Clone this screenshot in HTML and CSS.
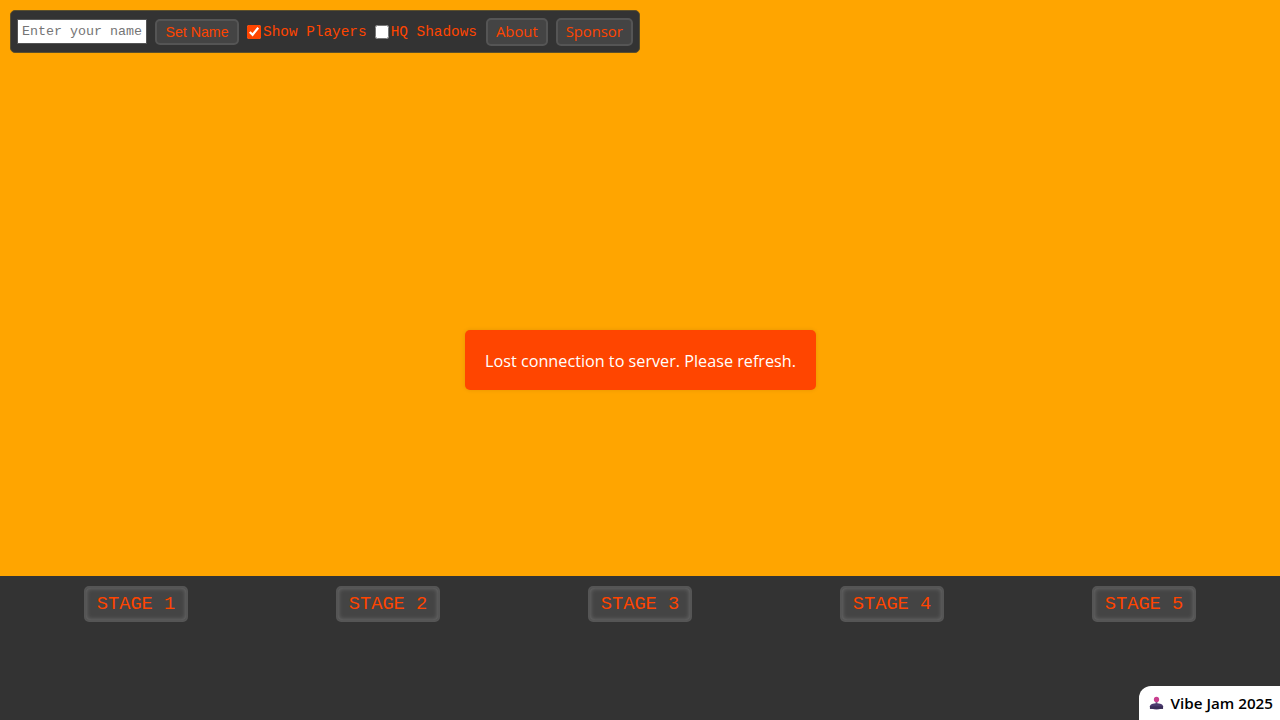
FILE: index.html
```html
<!DOCTYPE html>
<html lang="en">
<head>
    <meta charset="UTF-8">
    <meta name="viewport" content="width=device-width, initial-scale=1.0">
    <title>Stage Game</title>
    <link rel="stylesheet" href="styles.css">
</head>
<body>
    <div class="game-area">
        <div class="controls">
            <input class="name-input" type="text" placeholder="Enter your name">
            <button class="control-button set-name">Set Name</button>
            <label class="control-label"><input type="checkbox" checked>Show Players</label>
            <label class="control-label"><input type="checkbox">HQ Shadows</label>
            <button class="control-button">About</button>
            <button class="control-button">Sponsor</button>
        </div>
    </div>
    <div class="stage-bar">
        <div class="stage-cell"><button class="stage-button">STAGE 1</button></div>
        <div class="stage-cell"><button class="stage-button">STAGE 2</button></div>
        <div class="stage-cell"><button class="stage-button">STAGE 3</button></div>
        <div class="stage-cell"><button class="stage-button">STAGE 4</button></div>
        <div class="stage-cell"><button class="stage-button">STAGE 5</button></div>
    </div>
    <div class="message">Lost connection to server. Please refresh.</div>
    <a class="jam-badge" href="#">
        <svg class="jam-icon" viewBox="0 0 16 16" width="15" height="15">
            <rect x="7" y="4" width="2" height="6" fill="#7a5a86"/>
            <circle cx="8" cy="3.6" r="2.8" fill="#c93f8f"/>
            <ellipse cx="8" cy="11" rx="7" ry="3.4" fill="#4b3a6e"/>
            <rect x="1" y="11" width="14" height="2.8" fill="#3a2d58"/>
        </svg>
        Vibe Jam 2025
    </a>
</body>
</html>
```

FILE: styles.css
```css
body {
    margin: 0;
    display: flex;
    flex-direction: column;
    height: 720px;
    overflow: hidden;
    background-color: #333;
}

.game-area {
    flex: 0 0 576px;
    position: relative;
    background-color: #ffa500;
}

.controls {
    position: absolute;
    top: 10px;
    left: 10px;
    display: flex;
    align-items: center;
    gap: 8px;
    height: 43px;
    box-sizing: border-box;
    padding: 0 6px;
    background: #333;
    border: 1px solid #5c4f2a;
    border-radius: 5px;
    white-space: nowrap;
}

.name-input {
    width: 130px;
    height: 25px;
    box-sizing: border-box;
    padding: 0 4px;
    border: 1px solid #555;
    background: white;
    font-family: "Liberation Mono", monospace;
    font-size: 13.33px;
}

.name-input::placeholder {
    color: #757575;
}

.control-button {
    height: 28px;
    padding: 0 8px 2px;
    background: #444;
    color: #ff4500;
    border: 2px solid #555;
    border-radius: 5px;
    font-family: "Open Sans", sans-serif;
    font-size: 14.8px;
}

.set-name {
    width: 84px;
    height: 26px;
    padding: 0;
    font-family: "Liberation Sans", Arial, sans-serif;
    font-size: 14.2px;
}

.control-label {
    display: flex;
    align-items: center;
    color: #ff4500;
    font-family: "Liberation Mono", monospace;
    font-size: 14.4px;
}

.control-label input {
    width: 14px;
    height: 14px;
    margin: 0 2px 0 0;
    accent-color: #ff4500;
}

.control-label + .control-button {
    margin-left: 1px;
}

.message {
    position: absolute;
    top: 330px;
    left: 465px;
    width: 351px;
    height: 60px;
    box-sizing: border-box;
    padding-top: 2px;
    display: flex;
    align-items: center;
    justify-content: center;
    background: #ff4500;
    color: white;
    border-radius: 5px;
    font-family: "Open Sans", sans-serif;
    font-size: 16.2px;
    box-shadow: 0 0 4px rgba(0, 0, 0, 0.1);
}

.stage-bar {
    flex: 1;
    display: flex;
    padding: 0 10px;
    background: #333;
}

.stage-cell {
    flex: 1;
    display: flex;
    justify-content: center;
    align-items: flex-start;
    padding-top: 10px;
}

.stage-button {
    width: 104px;
    height: 36px;
    padding: 0;
    background: #444;
    color: #ff4500;
    border: 2px solid #555;
    border-radius: 5px;
    box-shadow: inset 0 0 5px rgba(255, 255, 255, 0.25);
    font-family: "Liberation Mono", monospace;
    font-size: 18.7px;
}

.jam-badge {
    position: absolute;
    right: 0;
    bottom: 0;
    display: flex;
    align-items: center;
    gap: 7px;
    height: 34px;
    padding: 0 7px 0 10px;
    background: white;
    color: black;
    border-top-left-radius: 12px;
    text-decoration: none;
    font-family: "Open Sans", sans-serif;
    font-size: 15.2px;
    font-weight: 600;
}
```
